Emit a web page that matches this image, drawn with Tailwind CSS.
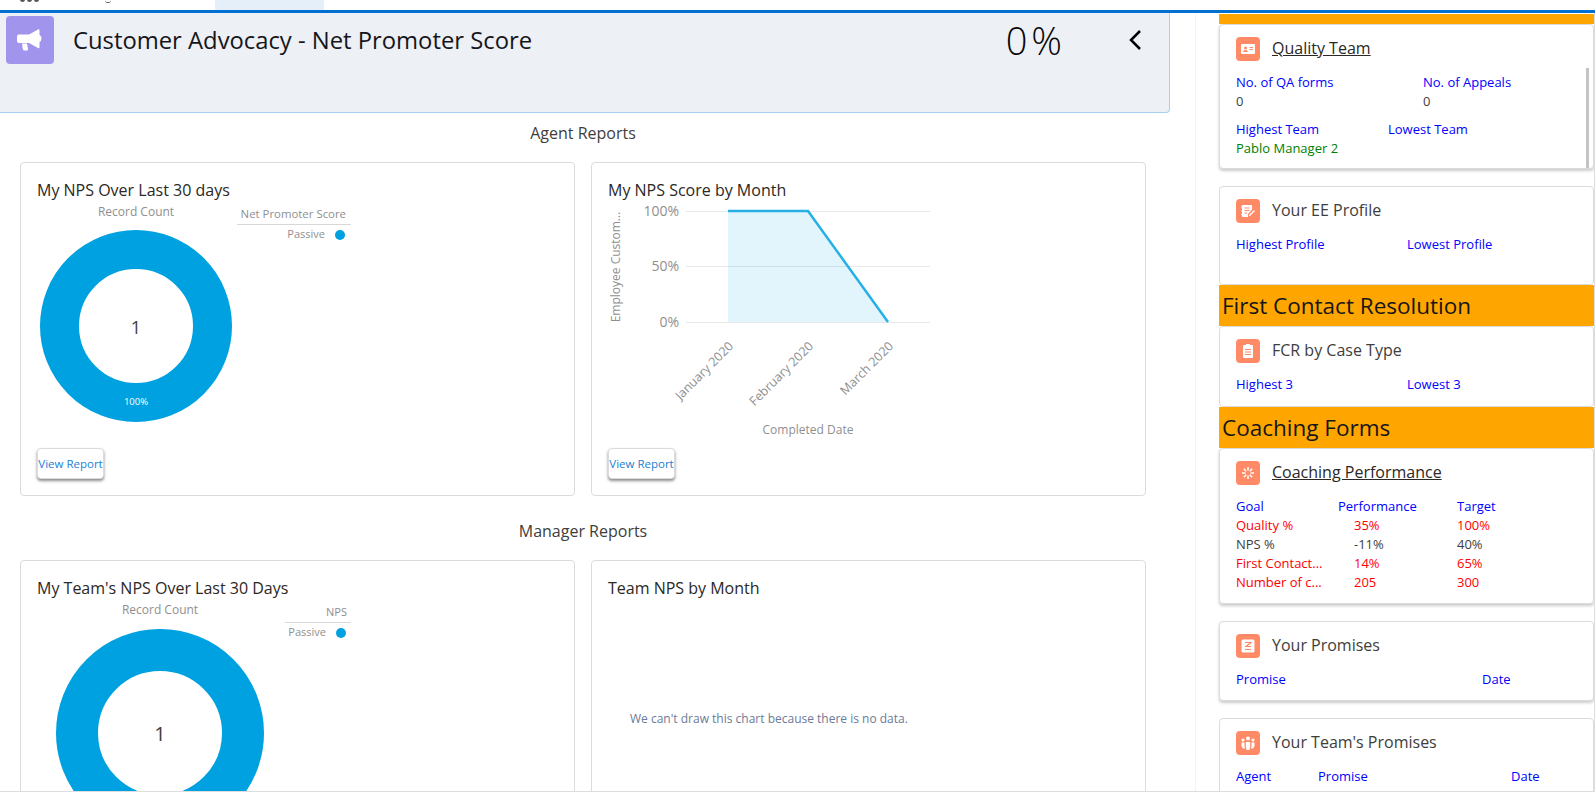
<!DOCTYPE html>
<html lang="en">
<head>
<meta charset="UTF-8">
<title>Customer Advocacy</title>
<script src="https://cdn.jsdelivr.net/npm/@tailwindcss/browser@4"></script>
</head>
<body class="h-screen overflow-hidden bg-white font-['Open_Sans',sans-serif] text-[#3e3e3c]">
  <!-- top tab strip, mostly scrolled off -->
  <div class="h-[10px] flex overflow-hidden bg-white">
    <div class="w-[215px] flex gap-[2px] pl-[20px]">
      <span class="w-[5px] h-[5px] -mt-[3px] rounded-full bg-[#555]"></span>
      <span class="w-[5px] h-[5px] -mt-[3px] rounded-full bg-[#555]"></span>
      <span class="w-[5px] h-[5px] -mt-[3px] rounded-full bg-[#555]"></span>
      <span class="ml-[64px] w-[6px] h-[3px] rounded-b-full border-b border-[#555]"></span>
    </div>
    <div class="w-[109px] bg-[#e5eff9]"></div>
  </div>
  <div class="h-[3px] bg-[#0070d2]"></div>

  <div class="flex h-[779px] overflow-hidden border-b border-b-[#dddddd] border-r border-r-[#dddddd]">
    <!-- main column -->
    <main class="w-[1166px] shrink-0">
      <header class="w-[1170px] h-[100px] bg-[#edf0f5] border-b border-r border-[#a9d0f0] rounded-br-[4px] flex items-start">
        <div class="ml-[6px] mt-[3px] w-[48px] h-[48px] rounded-[4px] bg-[#a094ed] flex items-center justify-center">
          <svg class="w-[32px] h-[32px]" viewBox="0 0 32 32" fill="#fff"><path d="M3 12.500q0-2 2-2h10l9-5q1.500-.8 1.500 1v4.500q2 .8 2 3.500t-2 3.500v5q0 1.800-1.500 1l-9-5H5q-2 0-2-2z"/><path d="M8 19.500h5l1 5.500q.2 1.500-1.500 1.500h-2q-1.500 0-1.700-1.500z"/></svg>
        </div>
        <h1 class="ml-[19px] mt-[9px] text-[23.800px] leading-[36px] text-[#16161a]">Customer Advocacy - Net Promoter Score</h1>
        <span class="ml-auto mt-[3px] text-[38px] leading-[48px] font-light tracking-[4px] text-[#080707]">0%</span>
        <svg class="ml-[62px] mr-[27px] mt-[17px] w-[14px] h-[20px]" viewBox="0 0 14 20" fill="none" stroke="#000" stroke-width="2.500"><path d="M12 1 3 10l9 9"/></svg>
      </header>

      <p class="mt-[10px] text-center text-[16px] leading-[20px]">Agent Reports</p>
      <div class="mt-[19px] ml-[20px] flex gap-[16px]">
        <section class="w-[555px] h-[334px] shrink-0 border border-[#dddbda] rounded-[4px] px-[16px] pt-[17px]">
          <h2 class="text-[16px] leading-[20px] text-[#2b2826]">My NPS Over Last 30 days</h2>
          <svg class="block w-[340px] h-[240px]" viewBox="37 200 340 240" font-size="12" fill="#8f8f8f">
            <text x="136" y="216" text-anchor="middle">Record Count</text>
            <circle cx="136" cy="326" r="76.500" fill="none" stroke="#00a1e0" stroke-width="39"/>
            <text x="136" y="334" text-anchor="middle" font-size="18" fill="#3e3e3c">1</text>
            <text x="136" y="405" text-anchor="middle" font-size="9.500" fill="#fff">100%</text>
            <text x="346" y="218" text-anchor="end" font-size="11.400">Net Promoter Score</text>
            <path d="M237 224.500h114" stroke="#d8d8d8"/>
            <text x="325" y="238" text-anchor="end" font-size="11">Passive</text>
            <circle cx="340" cy="235" r="5" fill="#00a1e0"/>
          </svg>
          <button class="mt-[8px] w-[67px] h-[31px] rounded-[4px] border border-[#dddbda] bg-white shadow-[0_2px_3px_rgba(0,0,0,0.45)] text-[11.500px] text-[#1b7fd6] whitespace-nowrap overflow-hidden">View Report</button>
        </section>
        <section class="w-[555px] h-[334px] shrink-0 border border-[#dddbda] rounded-[4px] px-[16px] pt-[17px]">
          <h2 class="text-[16px] leading-[20px] text-[#2b2826]">My NPS Score by Month</h2>
          <svg class="block w-[340px] h-[240px]" viewBox="608 200 340 240" font-size="12" fill="#8f8f8f">
            <path d="M686 211.500h244M686 266.500h244M686 322.500h244" stroke="#e6e8ea"/>
            <path d="M728 211H808L888 322H728z" fill="#00a1e0" fill-opacity=".11"/>
            <path d="M728 211H808L888 322" fill="none" stroke="#26b0e6" stroke-width="2.500"/>
            <text x="679" y="216" text-anchor="end" font-size="14">100%</text>
            <text x="679" y="271" text-anchor="end" font-size="14">50%</text>
            <text x="679" y="327" text-anchor="end" font-size="14">0%</text>
            <text x="620" y="267" text-anchor="middle" transform="rotate(-90 620 267)">Employee Custom...</text>
            <text x="734" y="347" text-anchor="end" font-size="12.500" transform="rotate(-45 734 347)">January 2020</text>
            <text x="814" y="347" text-anchor="end" font-size="12.500" transform="rotate(-45 814 347)">February 2020</text>
            <text x="894" y="347" text-anchor="end" font-size="12.500" transform="rotate(-45 894 347)">March 2020</text>
            <text x="808" y="434" text-anchor="middle">Completed Date</text>
          </svg>
          <button class="mt-[8px] w-[67px] h-[31px] rounded-[4px] border border-[#dddbda] bg-white shadow-[0_2px_3px_rgba(0,0,0,0.45)] text-[11.500px] text-[#1b7fd6] whitespace-nowrap overflow-hidden">View Report</button>
        </section>
      </div>

      <p class="mt-[25px] text-center text-[16px] leading-[20px]">Manager Reports</p>
      <div class="mt-[19px] ml-[20px] flex gap-[16px]">
        <section class="w-[555px] h-[333px] shrink-0 border border-[#dddbda] rounded-[4px] px-[16px] pt-[17px]">
          <h2 class="text-[16px] leading-[20px] text-[#2b2826]">My Team's NPS Over Last 30 Days</h2>
          <svg class="block w-[340px] h-[240px]" viewBox="37 598 340 240" font-size="12" fill="#8f8f8f">
            <text x="160" y="614" text-anchor="middle">Record Count</text>
            <circle cx="160" cy="733" r="83" fill="none" stroke="#00a1e0" stroke-width="42"/>
            <text x="160" y="741" text-anchor="middle" font-size="20" fill="#3e3e3c">1</text>
            <text x="347" y="616" text-anchor="end" font-size="11">NPS</text>
            <path d="M285 622.500h66" stroke="#d8d8d8"/>
            <text x="326" y="636" text-anchor="end" font-size="11">Passive</text>
            <circle cx="341" cy="633" r="5" fill="#00a1e0"/>
          </svg>
        </section>
        <section class="w-[555px] h-[333px] shrink-0 border border-[#dddbda] rounded-[4px] px-[16px] pt-[17px]">
          <h2 class="text-[16px] leading-[20px] text-[#2b2826]">Team NPS by Month</h2>
          <p class="mt-[113px] ml-[22px] text-[12px] leading-[16px] text-[#6b7a99]">We can't draw this chart because there is no data.</p>
        </section>
      </div>
    </main>

    <!-- right column -->
    <aside class="ml-[29px] pl-[23px] w-[399px] shrink-0 border-l border-[#f4f4f4] pt-px text-[13px] leading-[19px]">
      <div class="h-[10px] bg-[#ffa500]"></div>

      <section class="relative h-[145px] border border-[#dddbda] rounded-[4px] shadow-[0_2px_3px_rgba(0,0,0,0.2)] px-[16px] pt-[12px] bg-white">
        <div class="flex items-center gap-[12px] h-[24px]">
          <span class="w-[24px] h-[24px] rounded-[4px] bg-[#ff8a65] flex items-center justify-center">
            <svg class="w-[16px] h-[16px]" viewBox="0 0 16 16" fill="#fff"><path fill-rule="evenodd" d="M2 3h12q1 0 1 1v8q0 1-1 1H2q-1 0-1-1V4q0-1 1-1zm3.500 2.500a1.500 1.500 0 1 0 0 3 1.500 1.500 0 0 0 0-3zM3 11h5q0-2-2.500-2T3 11zm6.500-5v1H13V6zm0 2v1H13V8z"/></svg>
          </span>
          <a class="pb-[2px] text-[16px] underline text-[#2b2826]">Quality Team</a>
        </div>
        <div class="mt-[12px] grid grid-cols-[187px_1fr] text-[#0000ff] font-medium">
          <span>No. of QA forms</span><span>No. of Appeals</span>
          <span class="text-[#3e3e3c] font-normal">0</span><span class="text-[#3e3e3c] font-normal">0</span>
        </div>
        <div class="mt-[9px] grid grid-cols-[152px_1fr] font-medium">
          <span class="text-[#0000ff]">Highest Team</span><span class="text-[#0000ff]">Lowest Team</span>
          <span class="text-[#008000]">Pablo Manager 2</span>
        </div>
        <div class="absolute right-[4px] top-[43px] h-[100px] w-[3px] bg-[#c4c4c4]"></div>
      </section>

      <section class="mt-[17px] h-[99px] border border-[#dddbda] rounded-[4px] px-[16px] pt-[12px] bg-white">
        <div class="flex items-center gap-[12px] h-[24px]">
          <span class="w-[24px] h-[24px] rounded-[4px] bg-[#ff8a65] flex items-center justify-center">
            <svg class="w-[16px] h-[16px]" viewBox="0 0 16 16" fill="#fff"><path fill-rule="evenodd" d="M3 2h8q1 0 1 1v3.500L8 11v3H3q-1 0-1-1v-1H1v-1h1V8.500H1v-1h1V4.500H1v-1h1V3q0-1 1-1zm1.500 2.500v1h5v-1zm0 2.500v1h5V7zm0 2.500v1h2.500v-1z"/><path d="M9 12l5-5 1 1-5 5H9z"/></svg>
          </span>
          <span class="pb-[2px] text-[16px]">Your EE Profile</span>
        </div>
        <div class="mt-[12px] grid grid-cols-[171px_1fr] text-[#0000ff] font-medium">
          <span>Highest Profile</span><span>Lowest Profile</span>
        </div>
      </section>

      <h3 class="h-[41px] pl-[3px] bg-[#ffa500] text-[22.500px] leading-[41px] text-[#16161a]">First Contact Resolution</h3>

      <section class="h-[81px] border border-[#dddbda] rounded-[4px] px-[16px] pt-[12px] bg-white">
        <div class="flex items-center gap-[12px] h-[24px]">
          <span class="w-[24px] h-[24px] rounded-[4px] bg-[#ff8a65] flex items-center justify-center">
            <svg class="w-[16px] h-[16px]" viewBox="0 0 16 16" fill="#fff"><path fill-rule="evenodd" d="M6 1h4v1h2q1 0 1 1v11q0 1-1 1H4q-1 0-1-1V3q0-1 1-1h2zM5 6v1h6V6zm0 2.500v1h6v-1zM5 11v1h6v-1z"/></svg>
          </span>
          <span class="pb-[2px] text-[16px]">FCR by Case Type</span>
        </div>
        <div class="mt-[12px] grid grid-cols-[171px_1fr] text-[#0000ff] font-medium">
          <span>Highest 3</span><span>Lowest 3</span>
        </div>
      </section>

      <h3 class="h-[41px] pl-[3px] bg-[#ffa500] text-[22.500px] leading-[41px] text-[#16161a]">Coaching Forms</h3>

      <section class="h-[156px] border border-[#dddbda] rounded-[4px] shadow-[0_2px_3px_rgba(0,0,0,0.2)] px-[16px] pt-[12px] bg-white">
        <div class="flex items-center gap-[12px] h-[24px]">
          <span class="w-[24px] h-[24px] rounded-[4px] bg-[#ff8a65] flex items-center justify-center">
            <svg class="w-[16px] h-[16px]" viewBox="0 0 16 16" fill="none" stroke="#fff" stroke-width="1.500"><path d="M8 2v3.500M8 10.500V14M2 8h3.500M10.500 8H14M3.800 3.800l2.400 2.400M9.800 9.800l2.400 2.400M12.200 3.800 9.800 6.200M6.200 9.800l-2.400 2.400"/></svg>
          </span>
          <a class="pb-[2px] text-[16px] underline text-[#2b2826]">Coaching Performance</a>
        </div>
        <div class="mt-[12px] grid grid-cols-[102px_16px_103px_1fr] font-medium">
          <span class="text-[#0000ff]">Goal</span><span class="col-span-2 text-[#0000ff]">Performance</span><span class="text-[#0000ff]">Target</span>
          <span class="text-[#ff0000]">Quality %</span><span></span><span class="text-[#ff0000]">35%</span><span class="text-[#ff0000]">100%</span>
          <span class="font-normal">NPS %</span><span></span><span class="font-normal">-11%</span><span class="font-normal">40%</span>
          <span class="text-[#ff0000]">First Contact...</span><span></span><span class="text-[#ff0000]">14%</span><span class="text-[#ff0000]">65%</span>
          <span class="text-[#ff0000]">Number of c...</span><span></span><span class="text-[#ff0000]">205</span><span class="text-[#ff0000]">300</span>
        </div>
      </section>

      <section class="mt-[17px] h-[80px] border border-[#dddbda] rounded-[4px] shadow-[0_2px_3px_rgba(0,0,0,0.2)] px-[16px] pt-[12px] bg-white">
        <div class="flex items-center gap-[12px] h-[24px]">
          <span class="w-[24px] h-[24px] rounded-[4px] bg-[#ff8a65] flex items-center justify-center">
            <svg class="w-[16px] h-[16px]" viewBox="0 0 16 16"><rect x="1.500" y="1.500" width="13" height="13" rx="1.500" fill="#fff"/><path d="M5 4.500h6L6 8.500h5M5 11.500h6" fill="none" stroke="#ff8a65" stroke-width="1.200"/></svg>
          </span>
          <span class="pb-[2px] text-[16px]">Your Promises</span>
        </div>
        <div class="mt-[12px] grid grid-cols-[246px_1fr] text-[#0000ff] font-medium">
          <span>Promise</span><span>Date</span>
        </div>
      </section>

      <section class="mt-[17px] h-[90px] border border-[#dddbda] rounded-[4px] px-[16px] pt-[12px] bg-white">
        <div class="flex items-center gap-[12px] h-[24px]">
          <span class="w-[24px] h-[24px] rounded-[4px] bg-[#ff8a65] flex items-center justify-center">
            <svg class="w-[16px] h-[16px]" viewBox="0 0 16 16" fill="#fff"><circle cx="8" cy="3.500" r="2"/><circle cx="3" cy="5" r="1.500"/><circle cx="13" cy="5" r="1.500"/><path d="M5.800 7h4.400v4.500L9.500 15h-3l-.7-3.500zM1.500 7.500h3v4l.5 2H3l-1.500-2.500zM11.500 7.500h3V11L13 13.500h-2l.5-2z"/></svg>
          </span>
          <span class="pb-[2px] text-[16px]">Your Team's Promises</span>
        </div>
        <div class="mt-[12px] grid grid-cols-[82px_193px_1fr] text-[#0000ff] font-medium">
          <span>Agent</span><span>Promise</span><span>Date</span>
        </div>
      </section>
    </aside>
  </div>
</body>
</html>
